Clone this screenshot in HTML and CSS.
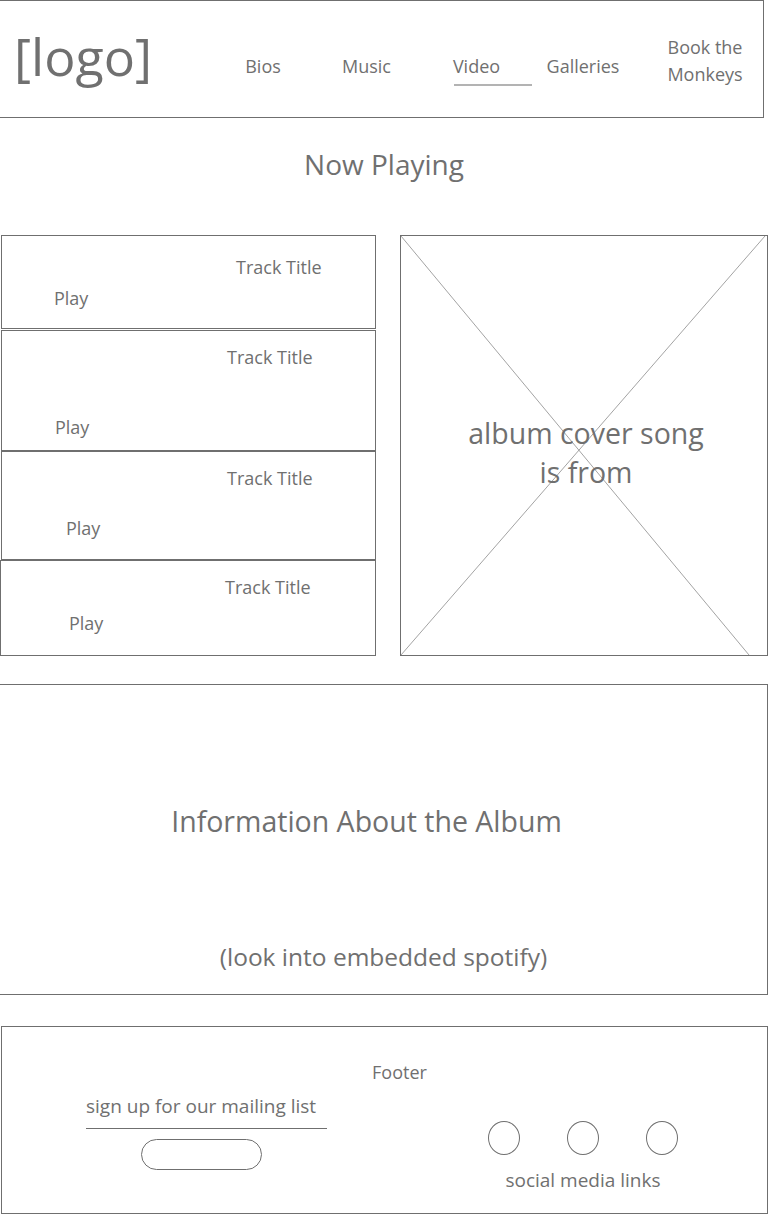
FILE: index.html
```html
<!DOCTYPE html>
<html lang="en">
<head>
    <meta charset="UTF-8">
    <meta name="viewport" content="width=device-width, initial-scale=1.0">
    <title>Now Playing - The Monkeys</title>
    <link rel="stylesheet" href="styles.css">
</head>
<body>
    <header class="header">
        <div class="logo">[logo]</div>
        <nav class="nav">
            <a href="#" class="nav-bios">Bios</a>
            <a href="#" class="nav-music">Music</a>
            <a href="#" class="nav-video active">Video</a>
            <a href="#" class="nav-galleries">Galleries</a>
            <a href="#" class="nav-book">Book the<br>Monkeys</a>
        </nav>
    </header>

    <h1 class="page-title">Now Playing</h1>

    <section class="player">
        <div class="tracks">
            <div class="track track-1">
                <div class="track-title">Track Title</div>
                <div class="track-play">Play</div>
            </div>
            <div class="track track-2">
                <div class="track-title">Track Title</div>
                <div class="track-play">Play</div>
            </div>
            <div class="track track-3">
                <div class="track-title">Track Title</div>
                <div class="track-play">Play</div>
            </div>
            <div class="track track-4">
                <div class="track-title">Track Title</div>
                <div class="track-play">Play</div>
            </div>
        </div>

        <div class="cover">
            <svg class="cover-x" viewBox="0 0 366 419" preserveAspectRatio="none">
                <line x1="0" y1="0" x2="348" y2="419" />
                <line x1="364" y1="0" x2="0" y2="419" />
            </svg>
            <p class="cover-text">album cover song<br>is from</p>
        </div>
    </section>

    <section class="info">
        <p class="info-title">Information About the Album</p>
        <p class="info-note">(look into embedded spotify)</p>
    </section>

    <footer class="footer">
        <div class="footer-title">Footer</div>
        <div class="footer-row">
            <div class="mailing">
                <div class="mailing-label">sign up for our mailing list</div>
                <div class="mailing-btn"></div>
            </div>
            <div class="social">
                <div class="social-icons">
                    <span class="circle"></span>
                    <span class="circle"></span>
                    <span class="circle"></span>
                </div>
                <div class="social-label">social media links</div>
            </div>
        </div>
    </footer>
</body>
</html>
```

FILE: styles.css
```css
body {
    margin: 0;
    width: 768px;
    font-family: "Open Sans", "Noto Sans", sans-serif;
    color: #707070;
    background: #ffffff;
}

/* cabecera */
.header {
    display: flex;
    align-items: center;
    width: 764px;
    height: 118px;
    box-sizing: border-box;
    border: 1px solid #6f6f6f;
    border-left: none;
}

.logo {
    flex: none;
    font-size: 52px;
    line-height: 60px;
    padding-left: 14px;
    width: 199px;
    margin-top: -6px;
}

.nav {
    display: flex;
    align-items: center;
    flex: 1;
}

.nav a {
    flex: none;
    color: #707070;
    text-decoration: none;
    font-size: 18px;
    line-height: 27px;
    text-align: center;
    position: relative;
}

.nav-bios,
.nav-music,
.nav-video,
.nav-galleries {
    margin-top: 14px;
}

.nav-bios { width: 100px; }
.nav-music { width: 107px; }
.nav-video { width: 113px; }
.nav-galleries { width: 100px; }
.nav-book { width: 116px; padding-left: 14px; margin-top: 4px; }

.nav .active::after {
    content: "";
    position: absolute;
    left: 34px;
    width: 78px;
    bottom: -6px;
    border-bottom: 2px solid #b3b3b3;
}

h1.page-title {
    font-weight: normal;
    font-size: 28px;
    line-height: 36px;
    text-align: center;
    margin: 28px 0 53px;
}

/* reproductor */
.player {
    display: flex;
    gap: 24px;
}

.tracks {
    width: 376px;
    display: flex;
    flex-direction: column;
}

.track {
    box-sizing: border-box;
    border: 1px solid #6f6f6f;
    font-size: 18px;
    line-height: 26px;
}

.track-1 { height: 94px; padding-top: 18px; margin-left: 1px; width: 375px; }
.track-2 { height: 121px; padding-top: 13px; margin-top: 1px; margin-left: 1px; }
.track-3 { height: 109px; padding-top: 13px; margin-left: 1px; }
.track-4 { height: 96px; padding-top: 13px; width: 376px; }

.track-1 .track-title { padding-left: 234px; }
.track-2 .track-title { padding-left: 225px; }
.track-3 .track-title { padding-left: 225px; }
.track-4 .track-title { padding-left: 224px; }

.track-1 .track-play { padding-left: 52px; margin-top: 5px; }
.track-2 .track-play { padding-left: 53px; margin-top: 44px; }
.track-3 .track-play { padding-left: 64px; margin-top: 24px; }
.track-4 .track-play { padding-left: 68px; margin-top: 10px; }

.cover {
    position: relative;
    width: 368px;
    height: 421px;
    box-sizing: border-box;
    border: 1px solid #6f6f6f;
    display: flex;
    align-items: center;
    justify-content: center;
}

.cover-x {
    position: absolute;
    top: 0;
    left: 0;
    width: 100%;
    height: 100%;
}

.cover-x line {
    stroke: #8c8c8c;
    stroke-width: 0.8;
}

.cover-text {
    position: relative;
    margin: 14px 0 0 4px;
    font-size: 28.5px;
    line-height: 39px;
    text-align: center;
}

/* info */
.info {
    margin-top: 28px;
    height: 311px;
    box-sizing: border-box;
    border: 1px solid #6f6f6f;
    border-left: none;
    text-align: center;
}

.info-title {
    margin: 116px 0 0;
    padding-right: 34px;
    font-size: 28.5px;
    line-height: 40px;
}

.info-note {
    margin: 99px 0 0;
    font-size: 24.5px;
    line-height: 34px;
}

/* footer */
.footer {
    margin-top: 31px;
    margin-left: 1px;
    height: 188px;
    box-sizing: border-box;
    border: 1px solid #6f6f6f;
}

.footer-title {
    font-size: 18px;
    line-height: 26px;
    text-align: center;
    padding-left: 30px;
    margin-top: 32px;
}

.footer-row {
    display: flex;
}

.mailing {
    flex: none;
    margin-left: 84px;
    width: 241px;
}

.mailing-label {
    font-size: 19px;
    line-height: 26px;
    margin-top: 8px;
    padding-bottom: 9px;
    border-bottom: 1px solid #6f6f6f;
}

.mailing-btn {
    width: 121px;
    height: 31px;
    box-sizing: border-box;
    border: 1px solid #6f6f6f;
    border-radius: 16px;
    margin: 10px 0 0 55px;
}

.social {
    flex: none;
    margin-left: 161px;
    display: flex;
    flex-direction: column;
    align-items: center;
    padding-top: 36px;
}

.social-icons {
    display: flex;
    gap: 47px;
}

.circle {
    display: block;
    width: 32px;
    height: 34px;
    box-sizing: border-box;
    border: 1px solid #6f6f6f;
    border-radius: 50%;
}

.social-label {
    font-size: 19px;
    line-height: 26px;
    margin-top: 12px;
}
```
